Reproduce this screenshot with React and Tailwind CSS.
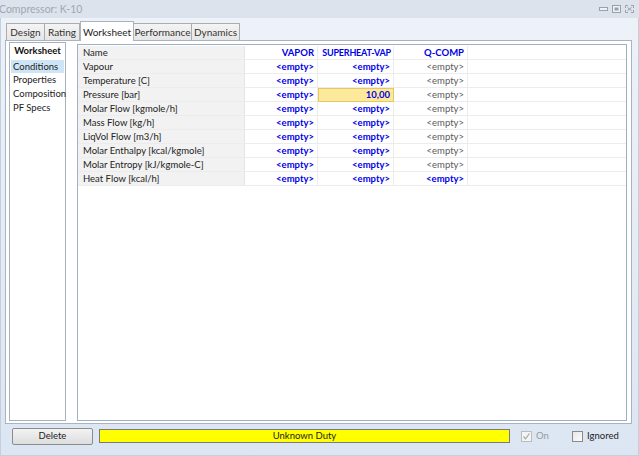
import React from 'react';

const rows = [
  { name: 'Vapour', v: 'b', s: 'b', q: 'g' },
  { name: 'Temperature [C]', v: 'b', s: 'b', q: 'g' },
  { name: 'Pressure [bar]', v: 'b', s: 'val', q: 'g' },
  { name: 'Molar Flow [kgmole/h]', v: 'b', s: 'b', q: 'g' },
  { name: 'Mass Flow [kg/h]', v: 'b', s: 'b', q: 'g' },
  { name: 'LiqVol Flow [m3/h]', v: 'b', s: 'b', q: 'g' },
  { name: 'Molar Enthalpy [kcal/kgmole]', v: 'b', s: 'b', q: 'g' },
  { name: 'Molar Entropy [kJ/kgmole-C]', v: 'b', s: 'b', q: 'g' },
  { name: 'Heat Flow [kcal/h]', v: 'b', s: 'b', q: 'b' },
];

const Cell = ({ kind, w }) => {
  if (kind === 'val') {
    return (
      <div className={`${w} h-[14px] bg-[#fde99b] border border-[#e6c860] flex items-center justify-end pr-[3px] text-[#0000e0] font-bold`}>
        10,00
      </div>
    );
  }
  return (
    <div
      className={`${w} h-[14px] border-r border-[#ececec] flex items-center justify-end pr-[3px] ${
        kind === 'b' ? 'text-[#0000e8] font-bold' : 'text-[#5a5a5a]'
      }`}
    >
      &lt;empty&gt;
    </div>
  );
};

const Tab = ({ label, active, w }) => (
  <div
    className={
      active
        ? `${w} h-[20px] bg-white border border-[#a9b4c2] border-b-0 flex items-center justify-center text-[#1e1e1e] text-[10px] -mb-px relative z-10`
        : `${w} h-[17px] bg-gradient-to-b from-[#f4f4f4] to-[#e6e6e6] border border-[#acacac] border-b-0 -ml-px first:ml-0 flex items-center justify-center text-[#333] text-[10px]`
    }
  >
    {label}
  </div>
);

const CheckBox = ({ checked, disabled }) => (
  <div
    className={`w-[11px] h-[11px] border ${
      disabled ? 'border-[#bcbcbc] bg-[#f4f4f4]' : 'border-[#8a8a8a] bg-gradient-to-br from-[#e8e8e8] to-[#fafafa]'
    } flex items-center justify-center`}
  >
    {checked && (
      <svg width="9" height="9" viewBox="0 0 9 9">
        <path d="M1.5 4.5 L3.5 6.8 L7.5 1.5" stroke="#a8a8a8" strokeWidth="1.2" fill="none" />
      </svg>
    )}
  </div>
);

export default function App() {
  return (
    <div className="w-[639px] h-[456px] bg-[#dfe8f4] flex flex-col font-['Segoe_UI','Lato',sans-serif] text-[9.5px] leading-none overflow-hidden">
      {/* title bar */}
      <div className="h-[18px] bg-[#dce3ec] flex items-center justify-between shrink-0">
        <span className="text-[#a0a8b2] text-[10.5px] -ml-[1px]">Compressor: K-10</span>
        <div className="flex items-center gap-[4px] pr-[5px]">
          <svg width="9" height="6" viewBox="0 0 9 6">
            <rect x="0.5" y="1.5" width="8" height="3" fill="#eef1f5" stroke="#9aa1aa" />
          </svg>
          <svg width="9" height="8" viewBox="0 0 9 8">
            <rect x="0.5" y="0.5" width="8" height="7" fill="#eef1f5" stroke="#9aa1aa" />
            <rect x="2.5" y="2.5" width="4" height="3" fill="#9aa1aa" />
          </svg>
          <svg width="9" height="8" viewBox="0 0 9 8">
            <path d="M0.5 0.5 H3 M0.5 0.5 V3 M8.5 0.5 H6 M8.5 0.5 V3 M0.5 7.5 H3 M0.5 7.5 V5 M8.5 7.5 H6 M8.5 7.5 V5 M2.5 2.5 L6.5 5.5 M6.5 2.5 L2.5 5.5" stroke="#9aa1aa" fill="none" />
          </svg>
        </div>
      </div>

      {/* body */}
      <div className="flex-1 flex flex-col bg-gradient-to-b from-[#edf2f9] to-[#dce6f2] border-l border-r border-b border-[#c4cfdc] px-[4px]">
        {/* tabs */}
        <div className="flex items-end h-[22px] pt-[3px] pl-[1px]">
          <Tab label="Design" w="w-[39px]" />
          <Tab label="Rating" w="w-[36px]" />
          <Tab label="Worksheet" w="w-[54px]" active />
          <Tab label="Performance" w="w-[59px]" />
          <Tab label="Dynamics" w="w-[49px]" />
        </div>

        {/* panel */}
        <div className="h-[384px] w-[627px] bg-white border border-[#a9b4c2] flex pl-[3px] pt-[1px] pb-[2px] gap-[11px]">
          {/* nav */}
          <div className="w-[57px] border border-[#a8b0ba] border-t-0 flex flex-col">
            <div className="h-[16px] flex items-center justify-center font-bold text-[#111] border-t border-[#a8b0ba] -mx-px px-px">
              Worksheet
            </div>
            <div className="flex flex-col pt-[2px] px-[1px] text-[#222]">
              <div className="h-[13px] bg-[#cde5f7] flex items-center pl-[2px]">Conditions</div>
              <div className="h-[14px] flex items-center pl-[2px]">Properties</div>
              <div className="h-[14px] flex items-center pl-[2px]">Composition</div>
              <div className="h-[13px] flex items-center pl-[2px]">PF Specs</div>
            </div>
          </div>

          {/* grid */}
          <div className="flex-1 mt-[2px] mr-[4px] border border-[#9fb0c4] bg-white flex flex-col pt-[1px]">
            <div className="flex h-[14px] border-b border-[#ececec]">
              <div className="w-[167px] bg-[#f2f2f2] border-r border-[#e4e4e4] flex items-center pl-[5px] text-[#222]">Name</div>
              <div className="w-[73px] border-r border-[#ececec] flex items-center justify-end pr-[3px] text-[#0000e8] font-bold">VAPOR</div>
              <div className="w-[76px] border-r border-[#ececec] flex items-center justify-end pr-[2px] text-[#0000e8] font-bold whitespace-nowrap text-[9px] tracking-[-0.2px]">SUPERHEAT-VAP</div>
              <div className="w-[74px] border-r border-[#ececec] flex items-center justify-end pr-[3px] text-[#0000e8] font-bold">Q-COMP</div>
            </div>
            {rows.map((r) => (
              <div key={r.name} className="flex h-[14px] border-b border-[#ececec]">
                <div className="w-[167px] bg-[#f2f2f2] border-r border-[#e4e4e4] flex items-center pl-[5px] text-[#222]">{r.name}</div>
                <Cell kind={r.v} w="w-[73px]" />
                <Cell kind={r.s} w="w-[76px]" />
                <Cell kind={r.q} w="w-[74px]" />
              </div>
            ))}
          </div>
        </div>

        {/* bottom bar */}
        <div className="flex items-center h-[24px] pl-[7px]">
          <button className="w-[81px] h-[17px] rounded-[2px] border border-[#8c8c8c] bg-gradient-to-b from-[#f3f3f3] to-[#dddddd] text-[#222] flex items-center justify-center">
            Delete
          </button>
          <div className="ml-[6px] w-[411px] h-[14px] bg-[#ffff00] border border-[#7a7a7a] flex items-center justify-center text-[#222]">
            Unknown Duty
          </div>
          <div className="ml-[11px] w-[51px] flex items-center gap-[4px] text-[#9a9a9a]">
            <CheckBox checked disabled />
            <span>On</span>
          </div>
          <div className="flex items-center gap-[4px] text-[#222]">
            <CheckBox />
            <span>Ignored</span>
          </div>
        </div>
      </div>
    </div>
  );
}
